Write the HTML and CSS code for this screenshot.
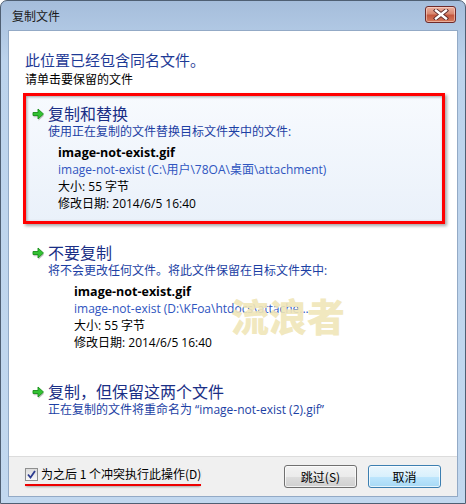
FILE: index.html
```html
<!DOCTYPE html>
<html lang="zh">
<head>
    <meta charset="UTF-8">
    <title>复制文件</title>
    <link rel="stylesheet" href="styles.css">
</head>
<body>
    <div class="window">
        <div class="titlebar">
            <span class="title">复制文件</span>
            <span class="close-btn">
                <svg width="16" height="11" viewBox="0 0 16 11">
                    <path d="M3 1.5 L13 9.5 M13 1.5 L3 9.5" stroke="#5a2a2a" stroke-width="4.2" stroke-linecap="square"/>
                    <path d="M3 1.5 L13 9.5 M13 1.5 L3 9.5" stroke="#ffffff" stroke-width="2.4" stroke-linecap="square"/>
                </svg>
            </span>
        </div>

        <div class="panel">
            <div class="content">
                <h1 class="main-title">此位置已经包含同名文件。</h1>
                <p class="hint">请单击要保留的文件</p>

                <div class="option selected">
                    <div class="option-head">
                        <svg class="arrow" width="13" height="13" viewBox="0 0 13 13">
                            <path d="M1 5 h5 v-3.5 l5.5 5 l-5.5 5 v-3.5 h-5 z" fill="#c4c4c4" transform="translate(0.5 1.2)"/>
                            <path d="M1 4.5 h5 v-3.5 l5.5 5 l-5.5 5 v-3.5 h-5 z" fill="#33c233" stroke="#1a8f1a" stroke-width="0.9" stroke-linejoin="round"/>
                        </svg>
                        <span class="option-title">复制和替换</span>
                    </div>
                    <div class="option-desc">使用正在复制的文件替换目标文件夹中的文件:</div>
                    <div class="file-info">
                        <div class="file-name">image-not-exist.gif</div>
                        <div class="file-path">image-not-exist (C:\用户\78OA\桌面\attachment)</div>
                        <div>大小: 55 字节</div>
                        <div>修改日期: 2014/6/5 16:40</div>
                    </div>
                </div>

                <div class="option">
                    <div class="option-head">
                        <svg class="arrow" width="13" height="13" viewBox="0 0 13 13">
                            <path d="M1 5 h5 v-3.5 l5.5 5 l-5.5 5 v-3.5 h-5 z" fill="#c4c4c4" transform="translate(0.5 1.2)"/>
                            <path d="M1 4.5 h5 v-3.5 l5.5 5 l-5.5 5 v-3.5 h-5 z" fill="#33c233" stroke="#1a8f1a" stroke-width="0.9" stroke-linejoin="round"/>
                        </svg>
                        <span class="option-title">不要复制</span>
                    </div>
                    <div class="option-desc">将不会更改任何文件。将此文件保留在目标文件夹中:</div>
                    <div class="file-info wide">
                        <div class="file-name">image-not-exist.gif</div>
                        <div class="file-path">image-not-exist (D:\KFoa\htdocs\attache...</div>
                        <div>大小: 55 字节</div>
                        <div>修改日期: 2014/6/5 16:40</div>
                    </div>
                    <span class="watermark">流浪者</span>
                </div>

                <div class="option">
                    <div class="option-head">
                        <svg class="arrow" width="13" height="13" viewBox="0 0 13 13">
                            <path d="M1 5 h5 v-3.5 l5.5 5 l-5.5 5 v-3.5 h-5 z" fill="#c4c4c4" transform="translate(0.5 1.2)"/>
                            <path d="M1 4.5 h5 v-3.5 l5.5 5 l-5.5 5 v-3.5 h-5 z" fill="#33c233" stroke="#1a8f1a" stroke-width="0.9" stroke-linejoin="round"/>
                        </svg>
                        <span class="option-title">复制，但保留这两个文件</span>
                    </div>
                    <div class="option-desc">正在复制的文件将重命名为 “image-not-exist (2).gif”</div>
                </div>
            </div>

            <div class="footer">
                <label class="check">
                    <span class="checkbox">
                        <svg width="9" height="9" viewBox="0 0 9 9">
                            <path d="M1 4.5 L3.5 7.5 L8 1" fill="none" stroke="#2c3b8f" stroke-width="1.8"/>
                        </svg>
                    </span>
                    <span class="check-label">为之后 1 个冲突执行此操作(D)</span>
                </label>
                <div class="buttons">
                    <span class="button">跳过(S)</span>
                    <span class="button default">取消</span>
                </div>
            </div>
        </div>
    </div>
</body>
</html>
```

FILE: styles.css
```css
/* styles.css */

body {
    margin: 0;
    padding: 0;
    font-family: "Open Sans", "Noto Sans CJK SC", sans-serif;
    font-size: 12px;
    color: #000000;
    background-color: #ffffff;
}

.window {
    width: 466px;
    height: 504px;
    box-sizing: border-box;
    border: 1px solid #4f5f73;
    border-radius: 7px 7px 0 0;
    background: linear-gradient(#a5bddb, #bcd3ec 60px, #c2d8ef);
    display: flex;
    flex-direction: column;
}

.titlebar {
    height: 29px;
    display: flex;
    align-items: center;
    justify-content: space-between;
    padding: 0 9px 0 11px;
}

.title {
    font-family: "Noto Sans CJK SC", sans-serif;
    font-size: 12px;
    color: #1a1a1a;
}

.close-btn {
    width: 29px;
    height: 15px;
    margin-top: -2px;
    border: 1px solid #6e2a2a;
    border-radius: 3px;
    background: linear-gradient(#ecb0a0, #d98870 45%, #c4573e 55%, #d47a5c);
    display: flex;
    align-items: center;
    justify-content: center;
    box-shadow: inset 0 0 0 1px rgba(255, 230, 220, 0.5);
}

.panel {
    flex: 1;
    margin: 0 7px 6px 7px;
    border: 1px solid #93aac6;
    display: flex;
    flex-direction: column;
}

.content {
    background-color: #ffffff;
    height: 425px;
    padding: 19px 12px 0 14px;
    box-sizing: border-box;
}

.main-title {
    margin: 0 0 1px 0;
    padding-left: 2px;
    font-family: "Noto Sans CJK SC", sans-serif;
    font-weight: normal;
    font-size: 15px;
    line-height: 20px;
    color: #1e3a96;
}

.hint {
    margin: 0 0 6px 0;
    padding-left: 2px;
    font-family: "Noto Sans CJK SC", sans-serif;
    line-height: 16px;
}

.option {
    position: relative;
    border: 3px solid transparent;
    padding: 7px 0 9px 0;
    margin-bottom: 8px;
}

.option.selected {
    border-color: #ff0000;
    background: linear-gradient(#f7fafe, #eaf1fa);
    box-shadow: 2px 2px 3px rgba(0, 0, 0, 0.35), inset 1px 1px 3px rgba(0, 0, 0, 0.35);
}

.option-head {
    display: flex;
    align-items: center;
    padding-left: 6px;
    height: 20px;
}

.arrow {
    margin-right: 3px;
    margin-top: 3px;
}

.option-title {
    font-family: "Noto Sans CJK SC", sans-serif;
    font-size: 16px;
    line-height: 20px;
    color: #1a2f86;
}

.option-desc {
    padding-left: 22px;
    line-height: 16px;
    margin-top: 1px;
    color: #1c3fa4;
}

.file-info {
    padding-left: 32px;
    margin-top: 4px;
    line-height: 17px;
}

.file-info.wide {
    padding-left: 48px;
}

.file-name {
    font-weight: bold;
    font-size: 12.5px;
}

.file-path {
    color: #2f55c0;
}

.watermark {
    position: absolute;
    left: 205px;
    top: 60px;
    font-family: "Noto Sans CJK SC", sans-serif;
    font-weight: 900;
    font-size: 38px;
    line-height: 40px;
    color: rgba(240, 230, 185, 0.93);
}

.footer {
    flex: 1;
    background-color: #f0f0f0;
    border-top: 1px solid #dcdcdc;
    display: flex;
    justify-content: space-between;
    align-items: flex-start;
    padding: 8px 16px 0 16px;
}

.check {
    display: flex;
    align-items: center;
    margin-top: 2px;
    padding-bottom: 3px;
    border-bottom: 2px solid #ee0000;
    box-shadow: 0 2px 2px -1px rgba(0, 0, 0, 0.3);
}

.checkbox {
    width: 11px;
    height: 11px;
    border: 1px solid #8e8f8f;
    background: linear-gradient(#dcdcdc, #f8f8f8);
    display: flex;
    align-items: center;
    justify-content: center;
    margin-right: 3px;
}

.check-label {
    font-family: "Noto Sans CJK SC", sans-serif;
    line-height: 14px;
}

.buttons {
    display: flex;
    gap: 11px;
}

.button {
    width: 71px;
    height: 21px;
    border: 1px solid #707070;
    border-radius: 3px;
    background: linear-gradient(#f2f2f2, #ebebeb 50%, #dddddd 51%, #cfcfcf);
    display: flex;
    align-items: center;
    justify-content: center;
    font-family: "Noto Sans CJK SC", sans-serif;
    box-shadow: inset 0 0 0 1px rgba(255, 255, 255, 0.7);
}

.button.default {
    border-color: #3c7fb1;
    background: linear-gradient(#eaf6fd, #d9f0fc 50%, #bee6fd 51%, #a7d9f5);
}
```
